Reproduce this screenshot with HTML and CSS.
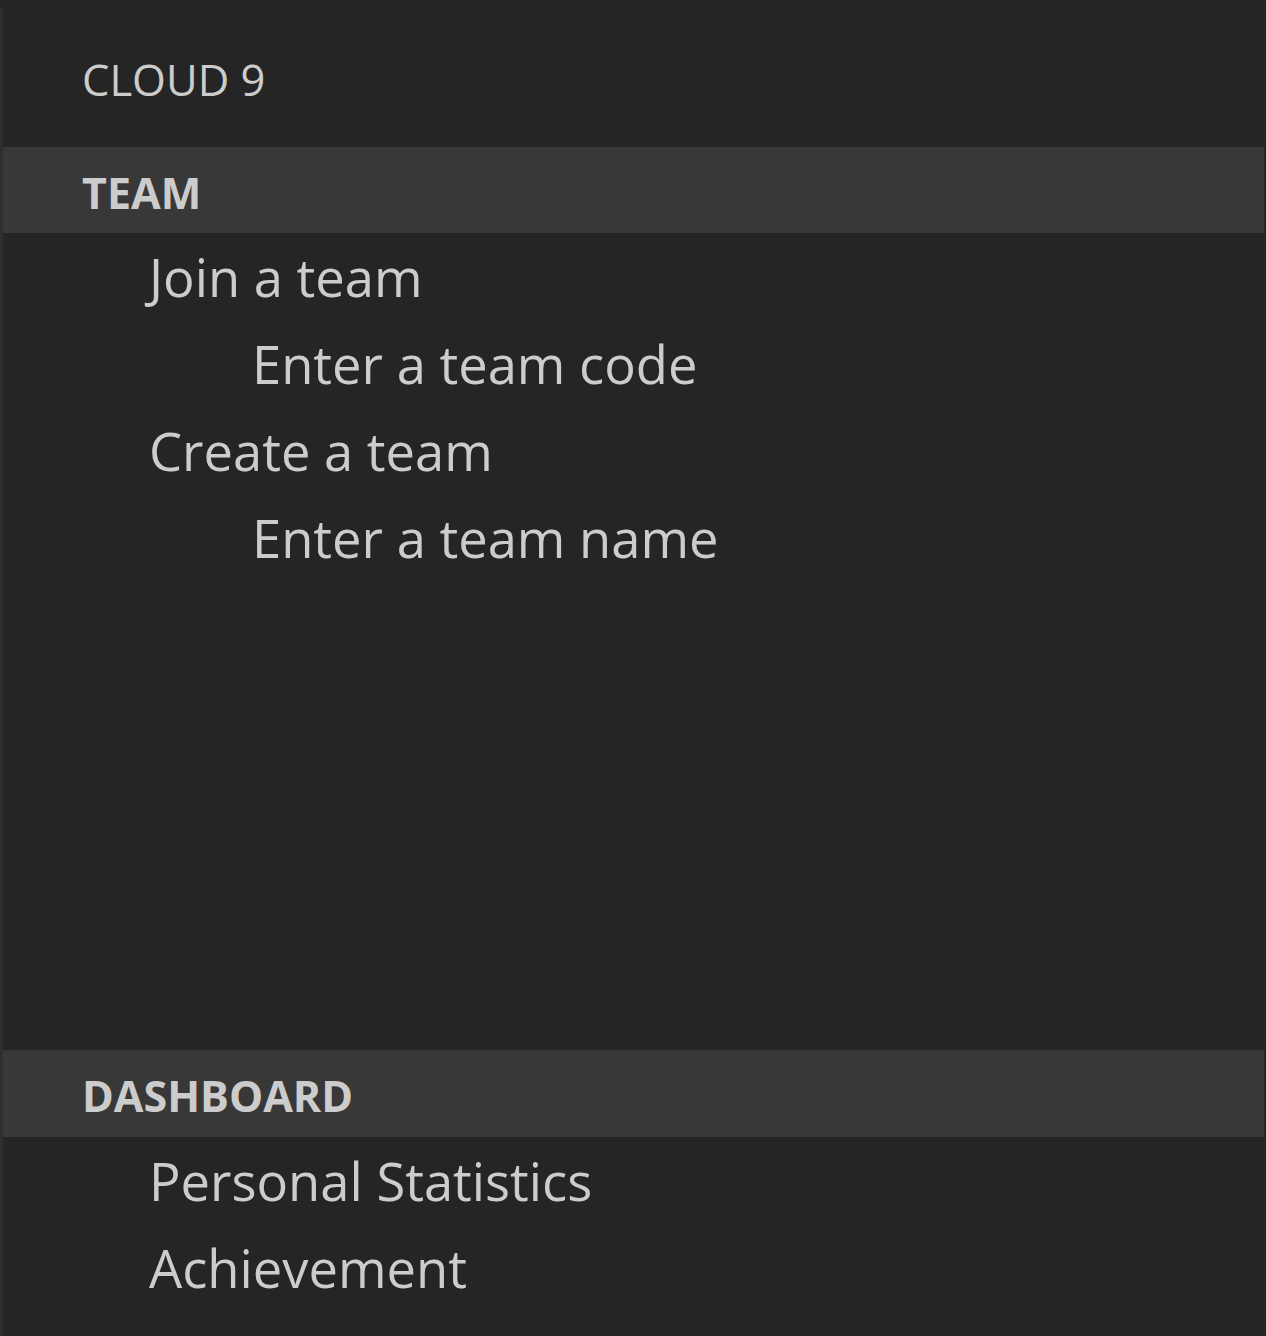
FILE: index.html
```html
<!DOCTYPE html>
<html>
<head>
<meta charset="utf-8">
<link rel="stylesheet" href="styles.css">
</head>
<body>
<div class="sidebar">
  <div class="title">CLOUD 9</div>
  <div class="section team">
    <div class="section-header">TEAM</div>
    <div class="item lvl1">Join a team</div>
    <div class="item lvl2">Enter a team code</div>
    <div class="item lvl1">Create a team</div>
    <div class="item lvl2">Enter a team name</div>
  </div>
  <div class="section dashboard">
    <div class="section-header">DASHBOARD</div>
    <div class="item lvl1">Personal Statistics</div>
    <div class="item lvl1">Achievement</div>
  </div>
</div>
</body>
</html>
```
FILE: styles.css
```css
html, body {
  margin: 0;
  padding: 0;
  background: #252525;
  height: 100%;
}
body {
  padding-top: 8px;
  box-sizing: border-box;
}
.sidebar {
  border-left: 3px solid #2f2f2f;
  height: 1328px;
  box-sizing: border-box;
  padding-bottom: 25px;
  display: flex;
  flex-direction: column;
  font-family: "Open Sans", "Noto Sans", sans-serif;
  color: #cccccc;
  margin-right: 2px;
}
.title {
  height: 139px;
  display: flex;
  align-items: center;
  padding-left: 79px;
  font-size: 43.5px;
  box-sizing: border-box;
  padding-top: 4px;
}
.section-header {
  height: 86px;
  background: #383838;
  display: flex;
  align-items: center;
  padding-left: 79px;
  font-size: 43px;
  font-weight: 700;
  box-sizing: border-box;
  padding-top: 4px;
}
.team {
  flex: 1;
}
.dashboard .section-header {
  height: 87px;
}
.item {
  height: 87px;
  display: flex;
  align-items: center;
  font-size: 52.5px;
}
.lvl1 { padding-left: 146px; }
.lvl2 { padding-left: 249px; }
```
